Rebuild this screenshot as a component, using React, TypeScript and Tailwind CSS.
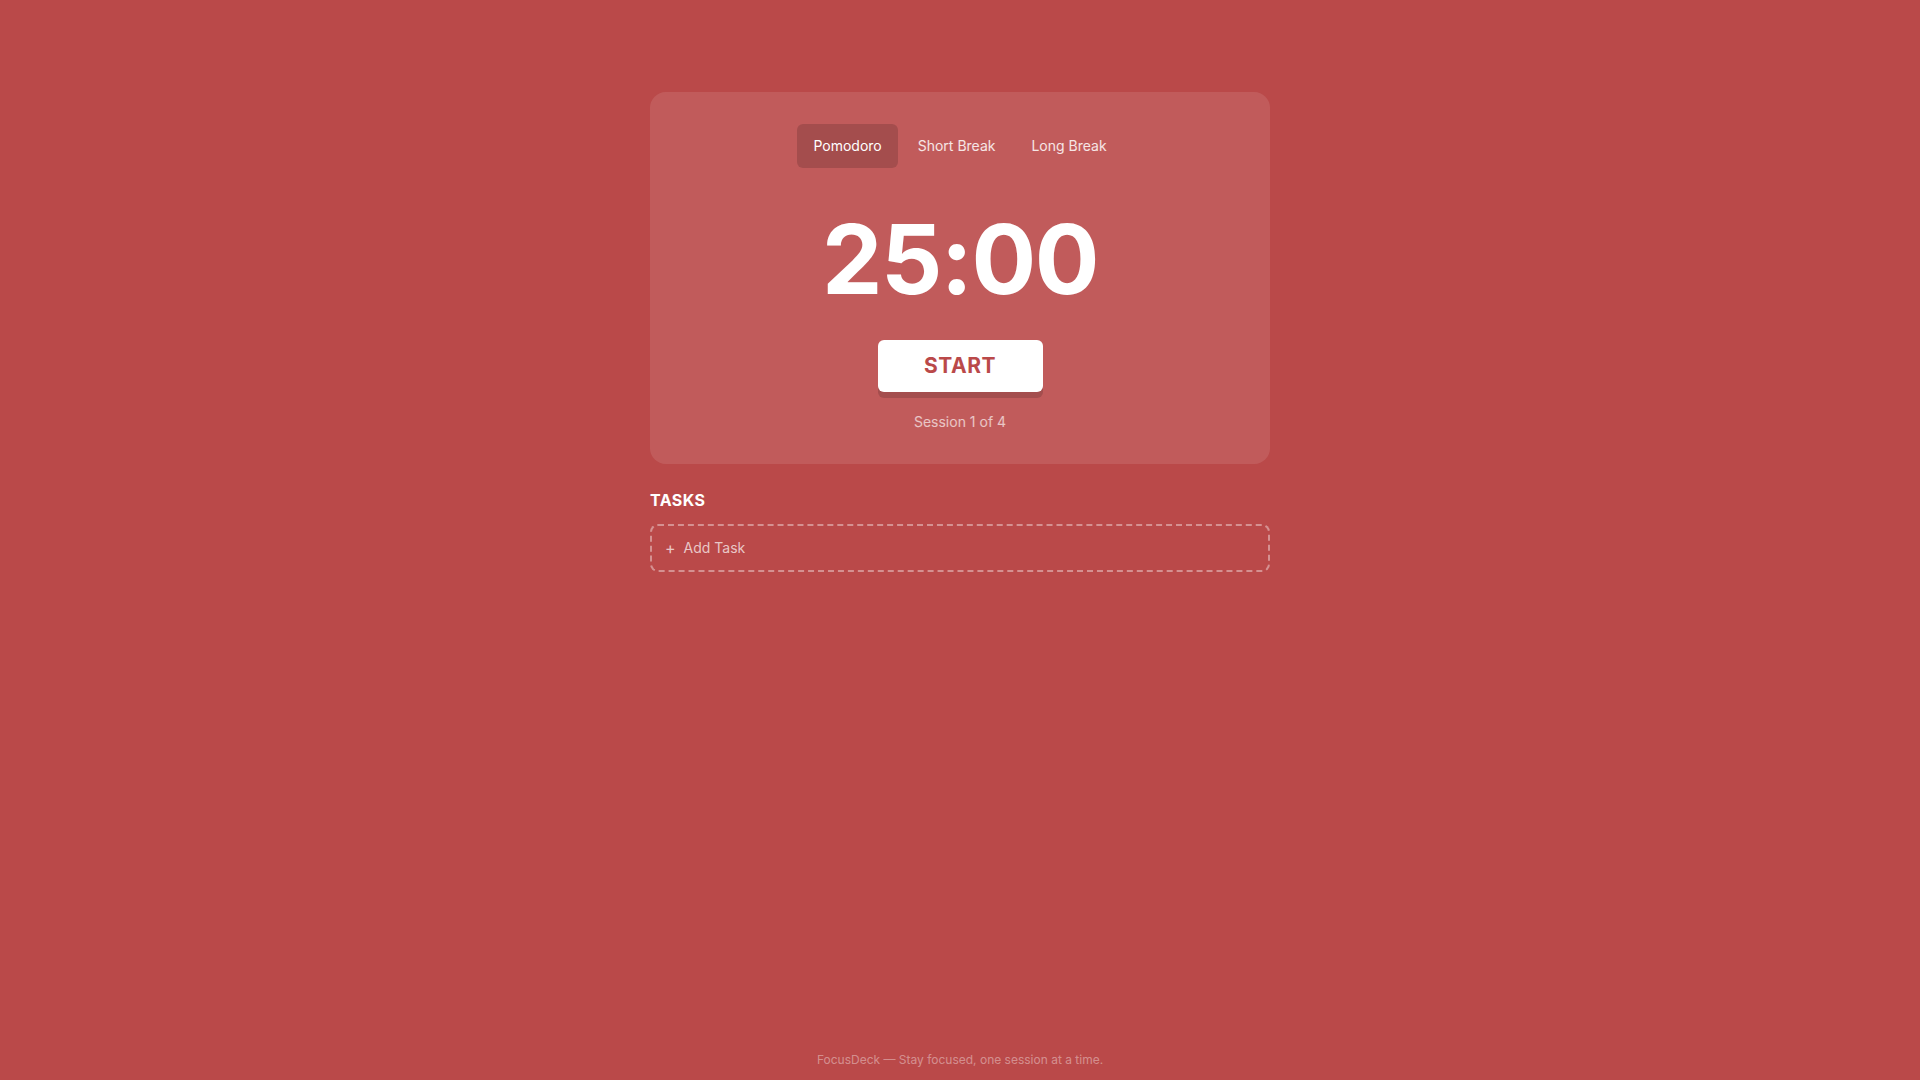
import { useState } from "react";

type Mode = "pomodoro" | "short" | "long";

const MODES: { id: Mode; label: string; minutes: number }[] = [
  { id: "pomodoro", label: "Pomodoro", minutes: 25 },
  { id: "short", label: "Short Break", minutes: 5 },
  { id: "long", label: "Long Break", minutes: 15 },
];

export default function App() {
  const [mode, setMode] = useState<Mode>("pomodoro");
  const [running, setRunning] = useState(false);
  const current = MODES.find((m) => m.id === mode)!;
  const time = `${String(current.minutes).padStart(2, "0")}:00`;

  return (
    <div className="min-h-screen flex flex-col bg-[#ba4949] text-white font-['Inter','Liberation_Sans',sans-serif]">
      <main className="flex-1 w-full max-w-[620px] mx-auto pt-[92px]">
        {/* Timer */}
        <section className="rounded-2xl bg-white/10 p-8 flex flex-col items-center">
          <div className="flex items-center gap-1">
            {MODES.map((m) => (
              <button
                key={m.id}
                onClick={() => setMode(m.id)}
                className={
                  m.id === mode
                    ? "h-11 px-4 rounded-md text-sm bg-black/15 text-white"
                    : "h-11 px-4 rounded-md text-sm text-white/85"
                }
              >
                {m.label}
              </button>
            ))}
          </div>

          <div className="mt-[43px] text-[96px] leading-none font-bold tracking-[-0.015em]">{time}</div>

          <button
            onClick={() => setRunning((r) => !r)}
            className="mt-[33px] w-[165px] h-[52px] rounded-md bg-white text-[#ba4949] text-[21px] font-bold tracking-wide shadow-[0_6px_0_#a44e4e]"
          >
            {running ? "PAUSE" : "START"}
          </button>

          <p className="mt-5 text-sm text-white/65">Session 1 of 4</p>
        </section>

        {/* Tasks */}
        <section className="mt-6">
          <h2 className="text-base font-bold tracking-wide mb-3">TASKS</h2>
          <button className="w-full flex items-center gap-2 px-[13px] py-3 rounded-lg border-2 border-dashed border-white/40 text-sm text-white/70">
            <span className="text-base leading-none">+</span> Add Task
          </button>
        </section>
      </main>

      <footer className="py-3 text-center text-xs text-white/40">
        FocusDeck — Stay focused, one session at a time.
      </footer>
    </div>
  );
}
